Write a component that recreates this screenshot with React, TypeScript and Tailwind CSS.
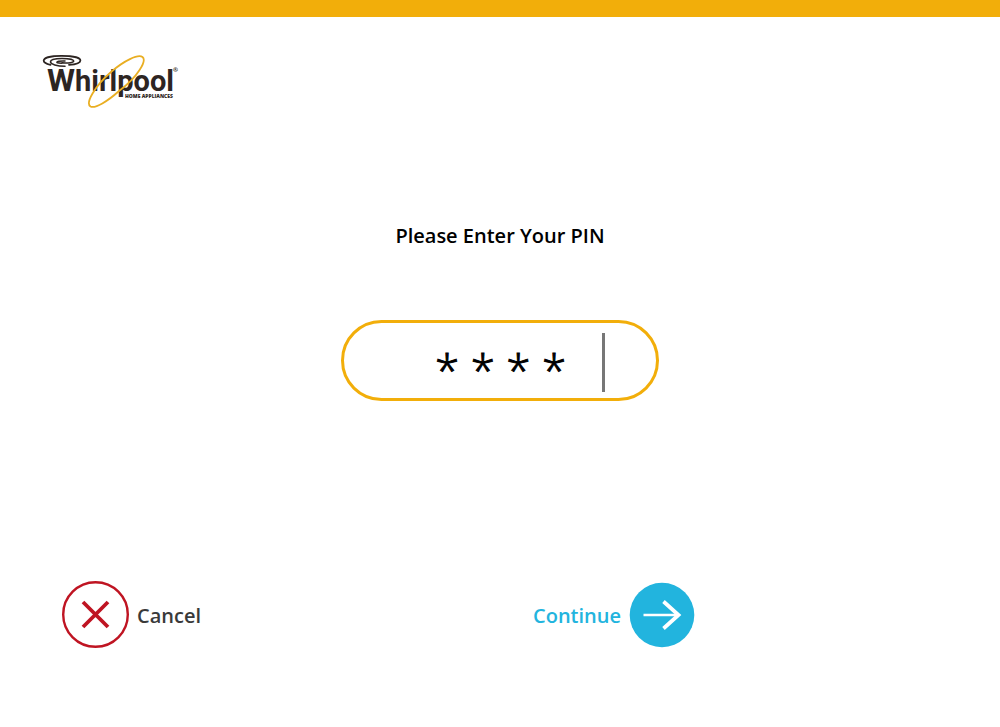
import { useState } from "react";

function Logo() {
  return (
    <svg
      role="img"
      aria-label="Whirlpool Home Appliances"
      className="block h-[56px] w-[142px]"
      viewBox="0 0 142 56"
      fill="none"
    >
      <g stroke="#2d2522" strokeLinecap="round">
        <path
          d="M10.500 11.800C6 10.800 3.600 9.300 3.700 7.500C4 4.500 12 2.900 21.500 2.900C32 2.900 40.400 4.500 40.400 7.400C40.400 9.800 36 11.300 29 11.800"
          strokeWidth="1.800"
        />
        <path
          d="M25 13.200C17 13.200 10.500 11.300 10.500 8.800C10.500 6.600 15.500 5.500 22 5.500C29 5.500 33.700 6.600 33.700 8.100C33.700 9.600 29 10.200 22 9.900"
          strokeWidth="1.600"
        />
        <path
          d="M21.500 10.200C17.500 10.200 16.500 9.600 17 8.900C17.600 8 21 7.900 25 8"
          strokeWidth="1.500"
        />
      </g>
      <text x="7" y="38" className="fill-[#2d2522] font-['Roboto',sans-serif] text-[32px] font-bold">
        W<tspan className="text-[29px]">hirlpool</tspan>
      </text>
      <text x="85" y="45" className="fill-[#2d2522] font-['Open_Sans',sans-serif] text-[5px] font-extrabold">
        HOME APPLIANCES
      </text>
      <text x="133" y="19" className="fill-[#2d2522] font-['Open_Sans',sans-serif] text-[6px] font-bold">
        ®
      </text>
      <path
        d="M79 38C68 48 55 56 50.500 53.500C45 50 55 33 71 19C84 7.500 98 1 102.500 4C107 7.500 98 24 79 38"
        stroke="#e9ae22"
        strokeWidth="1.800"
      />
    </svg>
  );
}

function CloseIcon() {
  return (
    <svg aria-hidden="true" className="size-[67px]" viewBox="0 0 67 67" fill="none" stroke="#bf1422">
      <circle cx="33.500" cy="33.500" r="32.300" strokeWidth="2.400" />
      <path d="M21 21L46 46M46 21L21 46" strokeWidth="3.800" />
    </svg>
  );
}

function ArrowIcon() {
  return (
    <svg aria-hidden="true" className="size-[66px]" viewBox="0 0 66 66" fill="none">
      <circle cx="33" cy="33" r="32.300" fill="#22b4de" />
      <path d="M14.500 33H50" stroke="white" strokeWidth="2.500" />
      <path d="M34.500 19.500L49.500 33L34.500 46.500" stroke="white" strokeWidth="3.800" />
    </svg>
  );
}

export default function App() {
  const [pin, setPin] = useState("* * * *");

  return (
    <main className="flex min-h-screen flex-col bg-white font-['Open_Sans',sans-serif]">
      <div className="h-[17px] bg-[#f2ae0a]" />
      <header className="px-10 pt-9">
        <Logo />
      </header>
      <form className="flex grow flex-col" onSubmit={(e) => e.preventDefault()}>
        <div className="flex flex-col items-center pt-[111px]">
          <label htmlFor="pin" className="text-xl leading-8 font-semibold text-black">
            Please Enter Your PIN
          </label>
          <div className="mt-17 flex h-[81px] w-[318px] items-center rounded-full border-[3px] border-[#f2ae0a] pr-[51px] pl-[91px]">
            <input
              id="pin"
              type="text"
              autoComplete="off"
              value={pin}
              onChange={(e) => setPin(e.target.value)}
              className="h-15 min-w-0 grow bg-transparent pt-[18px] text-[44px] leading-10 font-light text-black outline-none [-webkit-text-stroke:1px_black]"
            />
            <span aria-hidden="true" className="mt-1 h-[59px] w-[3px] shrink-0 bg-[#777777]" />
          </div>
        </div>
        <div className="mt-auto grid grid-cols-2 pb-[79px] pl-[62px]">
          <button
            type="button"
            className="flex items-center gap-2 justify-self-start text-xl leading-8 font-semibold text-[#3a3a3a]"
          >
            <CloseIcon />
            <span className="pt-0.5">Cancel</span>
          </button>
          <button
            type="submit"
            className="flex items-center gap-2 justify-self-start pl-0.5 text-xl leading-8 font-semibold text-[#22b4de]"
          >
            <span className="pt-0.5">Continue</span>
            <ArrowIcon />
          </button>
        </div>
      </form>
    </main>
  );
}
